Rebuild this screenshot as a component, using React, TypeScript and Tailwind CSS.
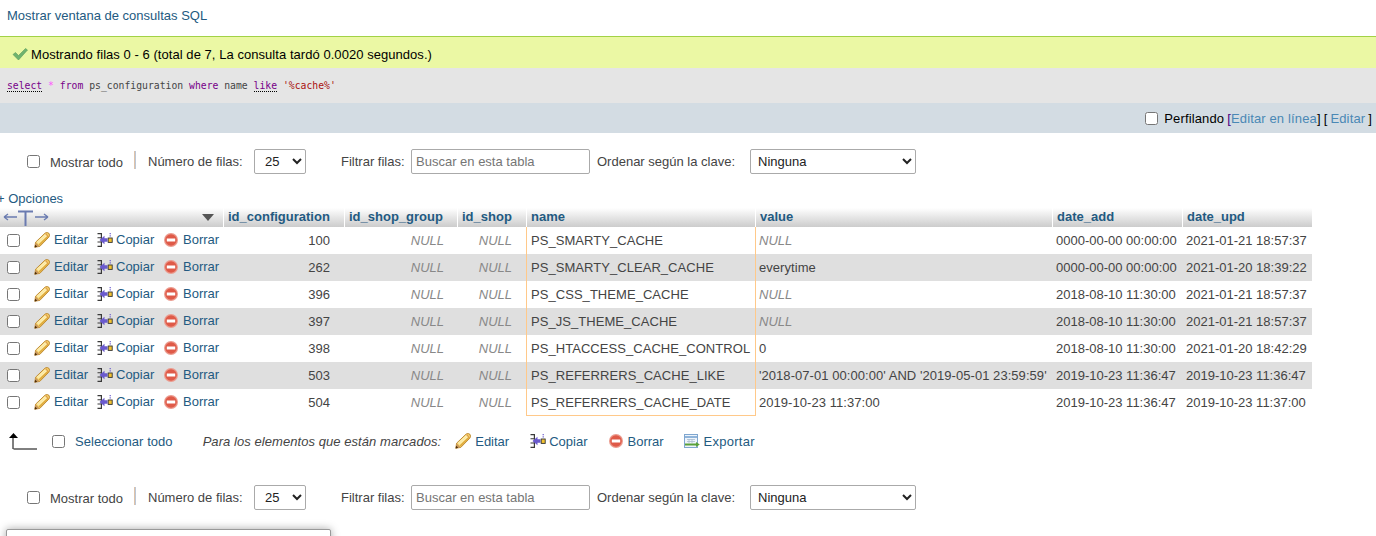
import React from "react";

const Pencil = () => (
  <svg width="16" height="16" viewBox="0 0 16 16" className="shrink-0">
    <path d="M0.8 15.2 L1.6 10.2 L11.2 1 Q13.2 -0.2 15 1.4 Q16.2 3.4 14.8 5.2 L5.8 14.4 Z" fill="#f6d26a" stroke="#b9822a" strokeWidth="0.9" />
    <path d="M3 10.4 L12.2 2 M4 11.4 L13.2 3" stroke="#fdf0b8" strokeWidth="1.1" />
    <path d="M5.2 13 L14.2 4.2" stroke="#dba53a" strokeWidth="1.2" />
    <path d="M11.5 1.5 L14.6 4.8" stroke="#e0a04a" strokeWidth="1.2" />
    <path d="M0.8 15.2 L1.6 10.2 L5.8 14.4 Z" fill="#c9985a" />
    <path d="M0.6 15.4 L1.2 12.8 L3.2 14.8 Z" fill="#4a2c0a" />
  </svg>
);

const CopyIcon = () => (
  <svg width="16" height="16" viewBox="0 0 16 16" className="shrink-0">
    <path d="M0.5 1 H5 V15 H0.5 V13.8 H3.8 V10.6 H0.5 V9.6 H3.8 V6.2 H0.5 V5.2 H3.8 V2.2 H0.5 Z" fill="#3a3a3a" />
    <path d="M2.5 8 L7.5 3.8 V6.3 H10.5 V9.7 H7.5 V12.2 Z" fill="#6a5acd" />
    <rect x="11.2" y="6" width="4" height="4.4" fill="#f2c230" stroke="#333" strokeWidth="0.9" />
    <path d="M12.6 1 H13.8 V2.2 H12.6 Z M12.6 3.2 H13.8 V4.4 H12.6 Z" fill="#6a5acd" />
  </svg>
);

const DeleteIcon = () => (
  <svg width="16" height="16" viewBox="0 0 16 16" className="shrink-0">
    <circle cx="8" cy="8" r="7" fill="#eb9b8e" />
    <circle cx="8" cy="8" r="5.8" fill="#df5a48" />
    <rect x="3.8" y="6.5" width="8.4" height="3" fill="#ffffff" />
  </svg>
);

const ExportIcon = () => (
  <svg width="16" height="16" viewBox="0 0 16 16" className="shrink-0">
    <rect x="0.5" y="1.5" width="13" height="13" fill="#eef4fb" stroke="#7fa6cf" strokeWidth="1" />
    <path d="M1 4 H13" stroke="#8fb4da" strokeWidth="2" />
    <path d="M3 6.5 H11 M3 8.5 H11 M5 6 V10 M8 6 V10" stroke="#a9bccf" strokeWidth="0.8" />
    <path d="M1 10.5 H12 V9 L15.8 11.5 L12 14 V12.5 H1 Z" fill="#5aa13a" />
  </svg>
);

const Sep = () => <span className="w-[2px] h-[18px] bg-gradient-to-r from-[#f0c090] to-[#a8c8ec] shrink-0" />;

function NavBar() {
  return (
    <div className="flex items-center h-[25px] text-[#444]">
      <input type="checkbox" className="ml-[27px] w-[13px] h-[13px] m-0 shrink-0" />
      <span className="ml-[10px] w-[73px] mt-[2px] whitespace-nowrap">Mostrar todo</span>
      <span className="ml-[11px] -mt-[3px] flex"><Sep /></span>
      <span className="ml-[12px] w-[95px] whitespace-nowrap">Número de filas:</span>
      <select className="ml-[11px] w-[52px] h-[25px] border border-[#aaa] rounded-[2px] bg-white pl-[6px] text-[#222]" defaultValue="25">
        <option>25</option>
      </select>
      <span className="ml-[35px] w-[63px] whitespace-nowrap">Filtrar filas:</span>
      <input
        className="ml-[7px] w-[179px] h-[25px] border border-[#aaa] rounded-[2px] bg-white px-[4px] placeholder:text-[#757575]"
        placeholder="Buscar en esta tabla"
      />
      <span className="ml-[7px] w-[139px] whitespace-nowrap">Ordenar según la clave:</span>
      <select className="ml-[14px] w-[166px] h-[25px] border border-[#aaa] rounded-[2px] bg-white pl-[3px] text-[#222]" defaultValue="Ninguna">
        <option>Ninguna</option>
      </select>
    </div>
  );
}

const rows = [
  ["100", "PS_SMARTY_CACHE", null, "0000-00-00 00:00:00", "2021-01-21 18:57:37"],
  ["262", "PS_SMARTY_CLEAR_CACHE", "everytime", "0000-00-00 00:00:00", "2021-01-20 18:39:22"],
  ["396", "PS_CSS_THEME_CACHE", null, "2018-08-10 11:30:00", "2021-01-21 18:57:37"],
  ["397", "PS_JS_THEME_CACHE", null, "2018-08-10 11:30:00", "2021-01-21 18:57:37"],
  ["398", "PS_HTACCESS_CACHE_CONTROL", "0", "2018-08-10 11:30:00", "2021-01-20 18:42:29"],
  ["503", "PS_REFERRERS_CACHE_LIKE", "'2018-07-01 00:00:00' AND '2019-05-01 23:59:59'", "2019-10-23 11:36:47", "2019-10-23 11:36:47"],
  ["504", "PS_REFERRERS_CACHE_DATE", "2019-10-23 11:37:00", "2019-10-23 11:36:47", "2019-10-23 11:37:00"],
] as const;

const headers = ["id_configuration", "id_shop_group", "id_shop", "name", "value", "date_add", "date_upd"];

export default function App() {
  return (
    <div className="w-[1376px] h-[536px] overflow-hidden bg-white text-[13px] leading-[15px] text-[#444] font-['Liberation_Sans',Arial,sans-serif] relative">
      <div className="h-[36px] pl-[7px] pt-[8px] text-[#235a81]">Mostrar ventana de consultas SQL</div>

      <div className="h-[32px] border-t border-[#a2d246] bg-[#ebf8a4] flex items-center pl-[12px] pt-[3px] text-[#000] tracking-[0.05px]">
        <svg width="16" height="14" viewBox="0 0 16 14" className="mr-[3px]">
          <path d="M1 7.5 L3.5 5.5 L6.5 8.5 L13.5 1.5 L15.5 3 L6.5 13 Z" fill="#6fb36f" stroke="#5a9a5a" strokeWidth="0.6" />
        </svg>
        <span>Mostrando filas 0 - 6 (total de 7, La consulta tardó 0.0020 segundos.)</span>
      </div>

      <div className="h-[35px] bg-[#e5e5e5] pl-[7px] pt-[11px] font-['DejaVu_Sans_Mono',monospace] text-[9.75px] leading-[13px] whitespace-pre">
        <span className="text-[#770088] border-b border-dotted border-black">select</span>
        <span> </span><span className="text-[#ff55ff]">*</span><span> </span>
        <span className="text-[#770088]">from</span><span className="text-[#444]"> ps_configuration </span>
        <span className="text-[#770088]">where</span><span className="text-[#444]"> name </span>
        <span className="text-[#770088] border-b border-dotted border-black">like</span><span> </span>
        <span className="text-[#aa1111]">'%cache%'</span>
      </div>

      <div className="h-[30px] bg-[#d3dce3] flex items-center justify-end pr-[4px] whitespace-nowrap text-[#000] tracking-[0.14px]">
        <input type="checkbox" className="w-[13px] h-[13px] m-0 mr-[6px]" />
        <span className="mr-[3px]">Perfilando</span>
        <span className="text-[#4b0082]">[</span>
        <span className="text-[#4a88b5]">Editar en línea</span>
        <span>]</span>
        <span className="ml-[3px]">[</span>
        <span className="text-[#4a88b5] mx-[3px]">Editar</span>
        <span>]</span>
      </div>

      <div className="mt-[16px]"><NavBar /></div>

      <div className="h-[34px] pt-[17px] text-[#235a81] whitespace-nowrap -ml-[3px]">+ Opciones</div>

      <table className="table-fixed border-separate border-spacing-0 w-[1312px]">
        <colgroup>
          <col className="w-[224px]" />
          <col className="w-[121px]" />
          <col className="w-[113px]" />
          <col className="w-[69px]" />
          <col className="w-[229px]" />
          <col className="w-[297px]" />
          <col className="w-[130px]" />
          <col className="w-[129px]" />
        </colgroup>
        <thead>
          <tr className="h-[19px] bg-gradient-to-b from-white to-[#cccccc]">
            <th className="p-0 border-r border-white">
              <div className="flex items-center justify-between h-[19px] pl-[2px] pr-[8px]">
                <svg width="48" height="16" viewBox="0 0 48 16">
                  <path d="M2 7 H15 M2 7 L6 4 M2 7 L6 10" stroke="#6a7bb0" strokeWidth="1.3" fill="none" />
                  <path d="M16 1.5 H31 M23.5 1.5 V16" stroke="#6a7bb0" strokeWidth="2" fill="none" />
                  <path d="M33 7 H46 M46 7 L42 4 M46 7 L42 10" stroke="#6a7bb0" strokeWidth="1.3" fill="none" />
                </svg>
                <svg width="14" height="9" viewBox="0 0 14 9">
                  <path d="M1 1 H13 L7 8 Z" fill="#555" />
                </svg>
              </div>
            </th>
            {headers.map((h) => (
              <th key={h} className="p-0 pl-[4px] pb-[2px] text-left font-bold text-[13px] text-[#235a81] border-r border-white last:border-r-0">{h}</th>
            ))}
          </tr>
        </thead>
        <tbody>
          {rows.map((r, i) => (
            <tr key={r[0]} className={`h-[27px] ${i % 2 === 1 ? "bg-[#dfdfdf]" : "bg-white"}`}>
              <td className="p-0 align-top">
                <div className="flex items-center h-[26px] whitespace-nowrap text-[#235a81]">
                  <input type="checkbox" className="ml-[7px] w-[13px] h-[13px] m-0 shrink-0" />
                  <span className="ml-[14px] flex"><Pencil /></span>
                  <span className="ml-[4px] w-[43px] -mt-[2px]">Editar</span>
                  <CopyIcon />
                  <span className="ml-[3px] w-[47px] -mt-[2px]">Copiar</span>
                  <span className="flex"><DeleteIcon /></span>
                  <span className="ml-[4px] -mt-[2px]">Borrar</span>
                </div>
              </td>
              <td className="p-0 pb-[1px] pr-[15px] text-right">{r[0]}</td>
              <td className="p-0 pb-[1px] pr-[14px] text-right italic text-[#888]">NULL</td>
              <td className="p-0 pb-[1px] pr-[14px] text-right italic text-[#888] border-r border-[#ffc98a]">NULL</td>
              <td className={`p-0 pl-[4px] whitespace-nowrap tracking-[0.05px] border-r border-[#ffc98a] ${i === 6 ? "border-b" : "pb-[1px]"}`}>{r[1]}</td>
              {r[2] === null ? (
                <td className="p-0 pb-[1px] pl-[3px] italic text-[#888]">NULL</td>
              ) : (
                <td className="p-0 pb-[1px] pl-[3px] whitespace-nowrap tracking-[0.05px]">{r[2]}</td>
              )}
              <td className="p-0 pb-[1px] pl-[3px] whitespace-nowrap">{r[3]}</td>
              <td className="p-0 pb-[1px] pl-[3px] whitespace-nowrap">{r[4]}</td>
            </tr>
          ))}
        </tbody>
      </table>

      <div className="flex items-center h-[30px] mt-[10px] whitespace-nowrap text-[#235a81]">
        <svg width="30" height="18" viewBox="0 0 30 18" className="ml-[9px] shrink-0">
          <path d="M4 17 V5 M4.5 17 H28" stroke="#000" strokeWidth="1" fill="none" />
          <path d="M0 6 L4.5 1 L9 6 Z" fill="#000" />
        </svg>
        <input type="checkbox" className="ml-[13px] w-[13px] h-[13px] m-0 shrink-0" />
        <span className="ml-[10px] tracking-[0.05px]">Seleccionar todo</span>
        <span className="ml-[30px] italic text-[#444] tracking-[0.06px]">Para los elementos que están marcados:</span>
        <span className="ml-[14px] flex"><Pencil /></span>
        <span className="ml-[4px]">Editar</span>
        <span className="ml-[21px] flex"><CopyIcon /></span>
        <span className="ml-[3px]">Copiar</span>
        <span className="ml-[21px] flex"><DeleteIcon /></span>
        <span className="ml-[3px]">Borrar</span>
        <span className="ml-[20px] flex"><ExportIcon /></span>
        <span className="ml-[4px] tracking-[0.25px]">Exportar</span>
      </div>

      <div className="mt-[29px]"><NavBar /></div>

      <div className="mt-[19px] ml-[6px] w-[325px] h-[40px] bg-white border border-[#999] rounded-[2px] shadow-[0_0_8px_rgba(0,0,0,0.35)]" />
    </div>
  );
}
